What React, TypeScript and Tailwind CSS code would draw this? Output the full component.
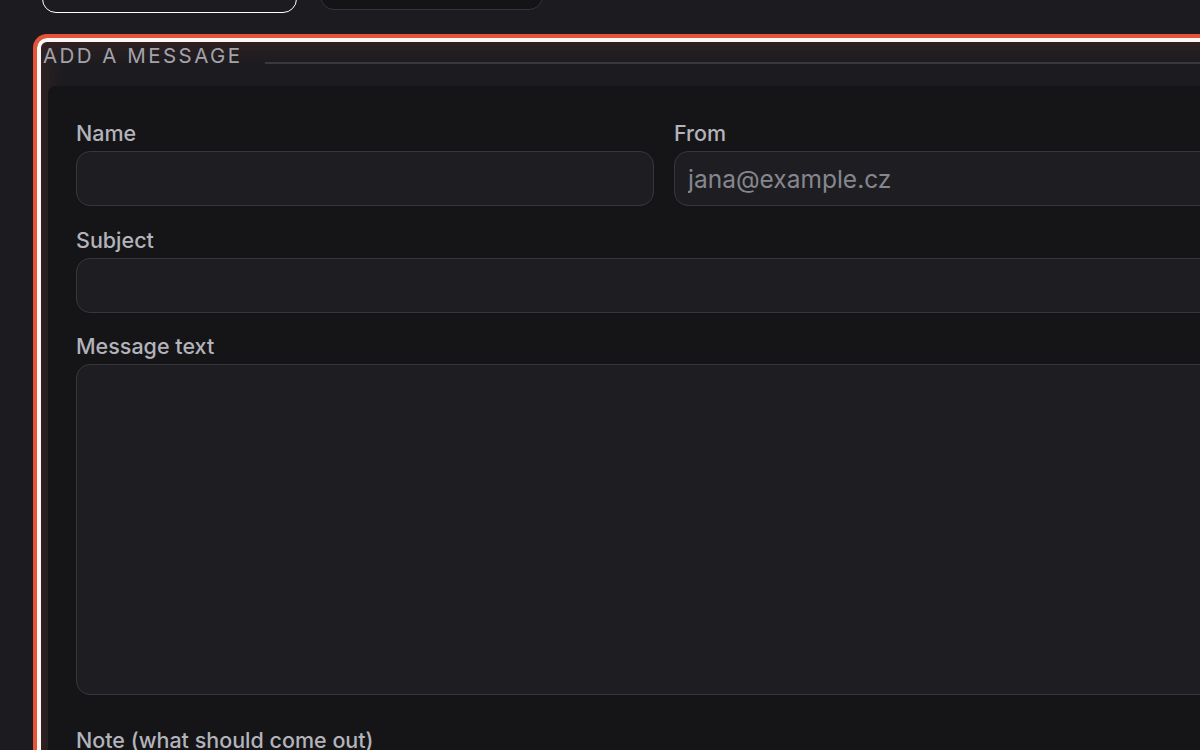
import React from 'react'

function Field({ label, placeholder, className }: { label: string; placeholder?: string; className?: string }) {
  return (
    <div className={'flex flex-col gap-[4px] ' + (className || '')}>
      <label className='h-[27px] leading-[27px] text-[21.5px] font-medium text-[#b3b3bb]'>{label}</label>
      <input
        className='h-[55px] w-full rounded-[14px] border-[1.5px] border-[#36363d] bg-[#1e1e22] px-[13px] text-[24.5px] text-[#d4d4d8] placeholder:text-[#86868e] outline-none'
        placeholder={placeholder}
      />
    </div>
  )
}

export default function App() {
  return (
    <div className='w-[1200px] h-[750px] overflow-hidden bg-[#1c1c20] font-["Inter","Liberation_Sans",sans-serif]'>
      <div className='flex items-start gap-[23px] pl-[42px] -mt-[43px]'>
        <button className='h-[56px] w-[255px] rounded-[14px] border-[1.5px] border-white bg-[#1c1c20]'></button>
        <button className='h-[53px] w-[223px] rounded-[14px] border-[1.5px] border-[#34343a] bg-[#141417]'></button>
      </div>

      <section className='mt-[25px] ml-[37px] w-[1260px] rounded-[10px] border-4 border-[#fdf6f2] ring-4 ring-[#e5533a] shadow-[inset_0_0_28px_rgba(229,83,58,0.2)] pl-[7px] pb-[40px]'>
        <div className='flex items-start gap-[22px] h-[44px] -ml-[5px]'>
          <span className='mt-[2px] text-[20.5px] leading-[24px] tracking-[0.12em] uppercase text-[#a3a3ab]'>Add a message</span>
          <div className='flex-1 mt-[20px] h-[1.5px] bg-[#38383e]'></div>
        </div>

        <div className='w-[1232px] rounded-[8px] bg-[#151518] px-[28px] pt-[34px] pb-[40px]'>
          <div className='grid grid-cols-2 gap-x-[20px]'>
            <Field label='Name' />
            <Field label='From' placeholder='jana@example.cz' />
          </div>
          <Field label='Subject' className='mt-[21px]' />
          <div className='mt-[20px] flex flex-col gap-[4px]'>
            <label className='h-[27px] leading-[27px] text-[21.5px] font-medium text-[#b3b3bb]'>Message text</label>
            <textarea className='h-[331px] w-full resize-none rounded-[14px] border-[1.5px] border-[#36363d] bg-[#1e1e22] outline-none'></textarea>
          </div>
          <div className='mt-[32px] flex flex-col gap-[4px]'>
            <label className='h-[27px] leading-[27px] text-[21.5px] font-medium text-[#b3b3bb]'>Note (what should come out)</label>
            <input className='h-[55px] w-full rounded-[14px] border-[1.5px] border-[#36363d] bg-[#1e1e22]' />
          </div>
        </div>
      </section>
    </div>
  )
}
